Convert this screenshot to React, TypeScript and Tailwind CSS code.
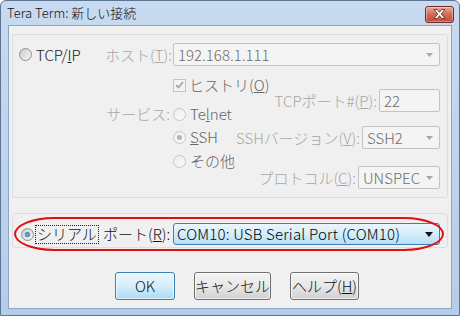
import React from 'react';

type RadioProps = {
  checked?: boolean;
  disabled?: boolean;
};

function Radio({ checked = false, disabled = false }: RadioProps) {
  const ring = disabled
    ? 'border-[#c6c6c6] bg-linear-to-br from-[#ececec] to-[#fbfbfb]'
    : 'border-[#8e8f8f] bg-linear-to-br from-[#c9ccd1] to-[#f7f7f7]';
  const dot = disabled
    ? 'bg-[#b5b5b5]'
    : 'bg-radial from-[#7ec4f4] to-[#174f82]';
  return (
    <span
      className={`w-[13px] h-[13px] shrink-0 rounded-full border flex items-center justify-center ${ring}`}
    >
      {checked && <span className={`w-[5px] h-[5px] rounded-full ${dot}`} />}
    </span>
  );
}

function DisabledCheck() {
  return (
    <span className="w-[13px] h-[13px] shrink-0 border border-[#c4c4c4] bg-[#f4f4f4] flex items-center justify-center">
      <svg width="9" height="8" viewBox="0 0 9 8">
        <path
          d="M1 4 L3.5 6.5 L8 1"
          fill="none"
          stroke="#a6a6a6"
          strokeWidth="1.8"
        />
      </svg>
    </span>
  );
}

type ComboProps = {
  value: string;
  width: string;
  height?: string;
};

function DisabledCombo({ value, width, height = 'h-[23px]' }: ComboProps) {
  return (
    <div
      className={`${width} ${height} shrink-0 border border-[#c3c3c3] rounded-[2px] bg-[#f4f4f4] flex items-center pl-[4px] pr-[6px] text-[#6d6d6d]`}
    >
      <span className="flex-1 overflow-hidden whitespace-nowrap">{value}</span>
      <svg width="7" height="4" viewBox="0 0 7 4" className="shrink-0">
        <path d="M0 0 H7 L3.5 4 Z" fill="#a8a8a8" />
      </svg>
    </div>
  );
}

function Button({
  children,
  width,
  primary = false,
}: {
  children: React.ReactNode;
  width: string;
  primary?: boolean;
}) {
  const skin = primary
    ? 'border-[#3c7fb1] bg-linear-to-b from-[#eaf6fd] via-[#d6eefb] to-[#a9daf5]'
    : 'border-[#707070] bg-linear-to-b from-[#f3f3f3] via-[#e8e8e8] to-[#d0d0d0]';
  return (
    <div
      className={`${width} h-[28px] border rounded-[3px] ${skin} flex items-center justify-center text-[#111] shadow-[inset_0_0_0_1px_rgba(255,255,255,0.7)]`}
    >
      {children}
    </div>
  );
}

export default function App() {
  return (
    <div
      className="w-[460px] h-[316px] flex flex-col border border-[#5b7593] rounded-t-[6px] bg-linear-to-b from-[#c7daf0] to-[#b6cde9] text-[15px] leading-[20px] font-light"
      style={{ fontFamily: '"Noto Sans CJK JP", sans-serif' }}
    >
      {/* title bar */}
      <div className="h-[24px] shrink-0 flex items-center pl-[6px] pr-[5px]">
        <span className="text-[13px] text-[#111] flex-1">
          Tera Term: 新しい接続
        </span>
        <div className="w-[29px] h-[17px] mt-[2px] rounded-[3px] border border-[#6b2a22] bg-linear-to-b from-[#e9a99a] via-[#d26a57] to-[#c44a35] flex items-center justify-center shadow-[inset_0_0_0_1px_rgba(255,255,255,0.35)]">
          <svg width="13" height="10" viewBox="0 0 13 10">
            <path
              d="M1 0.5 H4.3 L6.5 3.3 L8.7 0.5 H12 L8.2 5 L12 9.5 H8.7 L6.5 6.7 L4.3 9.5 H1 L4.8 5 Z"
              fill="#ffffff"
              stroke="#5a2019"
              strokeWidth="0.8"
            />
          </svg>
        </div>
      </div>

      {/* client area */}
      <div className="mx-[7px] mb-[6px] h-[284px] border border-[#8fa6c2] bg-[#f0f0f0] flex flex-col">
        {/* TCP/IP group */}
        <div className="ml-[3px] mt-[8px] w-[436px] h-[164px] border border-[#d5dfe5] rounded-[3px] flex flex-col">
          <div className="mt-[8px] h-[23px] pl-[6px] flex items-center">
            <div className="w-[86px] flex items-center gap-[4px] text-[#1a1a1a]">
              <Radio />
              <span>
                TCP/<span className="underline">I</span>P
              </span>
            </div>
            <div className="w-[68px] text-[#a7a7a7] whitespace-nowrap">
              ホスト(<span className="underline">T</span>):
            </div>
            <DisabledCombo value="192.168.1.111" width="w-[267px]" />
          </div>

          <div className="pl-[6px] flex">
            <div className="w-[153px] flex flex-col items-end pr-[2px]">
              <div className="mt-[38px] h-[20px] text-[#a7a7a7]">サービス:</div>
            </div>

            <div className="w-[96px] flex flex-col text-[#666]">
              <div className="mt-[9px] h-[20px] pl-[1px] flex items-center gap-[3px] whitespace-nowrap">
                <DisabledCheck />
                <span>
                  ヒストリ(<span className="underline">O</span>)
                </span>
              </div>
              <div className="mt-[9px] h-[20px] pl-[1px] flex items-center gap-[4px]">
                <Radio disabled />
                <span>
                  Te<span className="underline">l</span>net
                </span>
              </div>
              <div className="mt-[3px] h-[20px] pl-[1px] flex items-center gap-[4px]">
                <Radio disabled checked />
                <span>
                  <span className="underline">S</span>SH
                </span>
              </div>
              <div className="mt-[4px] h-[20px] pl-[1px] flex items-center gap-[4px]">
                <Radio disabled />
                <span>その他</span>
              </div>
            </div>

            <div className="w-[172px] flex flex-col items-end text-[#a7a7a7] whitespace-nowrap">
              <div className="mt-[23px] flex items-center gap-[2px]">
                <span>
                  TCPポート#(<span className="underline">P</span>):
                </span>
                <div className="w-[61px] h-[23px] border border-[#c3c3c3] rounded-[2px] bg-[#f4f4f4] pl-[4px] flex items-center text-[#6d6d6d]">
                  22
                </div>
              </div>
              <div className="mt-[14px] flex items-center gap-[2px]">
                <span>
                  SSHバージョン(<span className="underline">V</span>):
                </span>
                <DisabledCombo value="SSH2" width="w-[78px]" />
              </div>
              <div className="mt-[17px] flex items-center gap-[2px]">
                <span>
                  プロトコル(<span className="underline">C</span>):
                </span>
                <DisabledCombo value="UNSPEC" width="w-[82px]" />
              </div>
            </div>
          </div>
        </div>

        {/* serial group */}
        <div className="relative ml-[3px] mt-[15px] w-[436px] h-[35px] border border-[#d5dfe5] rounded-[3px]">
          <div className="mt-[9px] h-[22px] pl-[8px] flex items-center">
            <div className="w-[82px] flex items-center gap-[1px] text-[#111]">
              <Radio checked />
              <span className="h-[19px] px-[1px] flex items-center border border-dotted border-[#222]">
                シリアル
              </span>
            </div>
            <div className="w-[70px] text-[#111] whitespace-nowrap">
              ポート(<span className="underline">R</span>):
            </div>
            <div className="w-[267px] h-[22px] border border-[#3c7fb1] rounded-[3px] bg-linear-to-b from-[#eaf6fd] via-[#d4edfb] to-[#b4dff6] flex items-center pl-[3px] pr-[6px] text-[#000] whitespace-nowrap tracking-[0.2px]">
              <span className="flex-1">COM10: USB Serial Port (COM10)</span>
              <svg width="8" height="5" viewBox="0 0 8 5">
                <path d="M0 0 H8 L4 5 Z" fill="#111" />
              </svg>
            </div>
          </div>
          {/* hand-drawn red marker */}
          <div className="absolute left-[1px] top-[3px] w-[430px] h-[34px] border-2 border-[#e01010] rounded-[40px_/_17px] pointer-events-none" />
        </div>

        {/* buttons */}
        <div className="mt-[24px] pl-[106px] flex gap-[19px]">
          <Button width="w-[60px]" primary>
            OK
          </Button>
          <Button width="w-[77px]">キャンセル</Button>
          <Button width="w-[69px]">
            ヘルプ(<span className="underline">H</span>)
          </Button>
        </div>
      </div>
    </div>
  );
}
